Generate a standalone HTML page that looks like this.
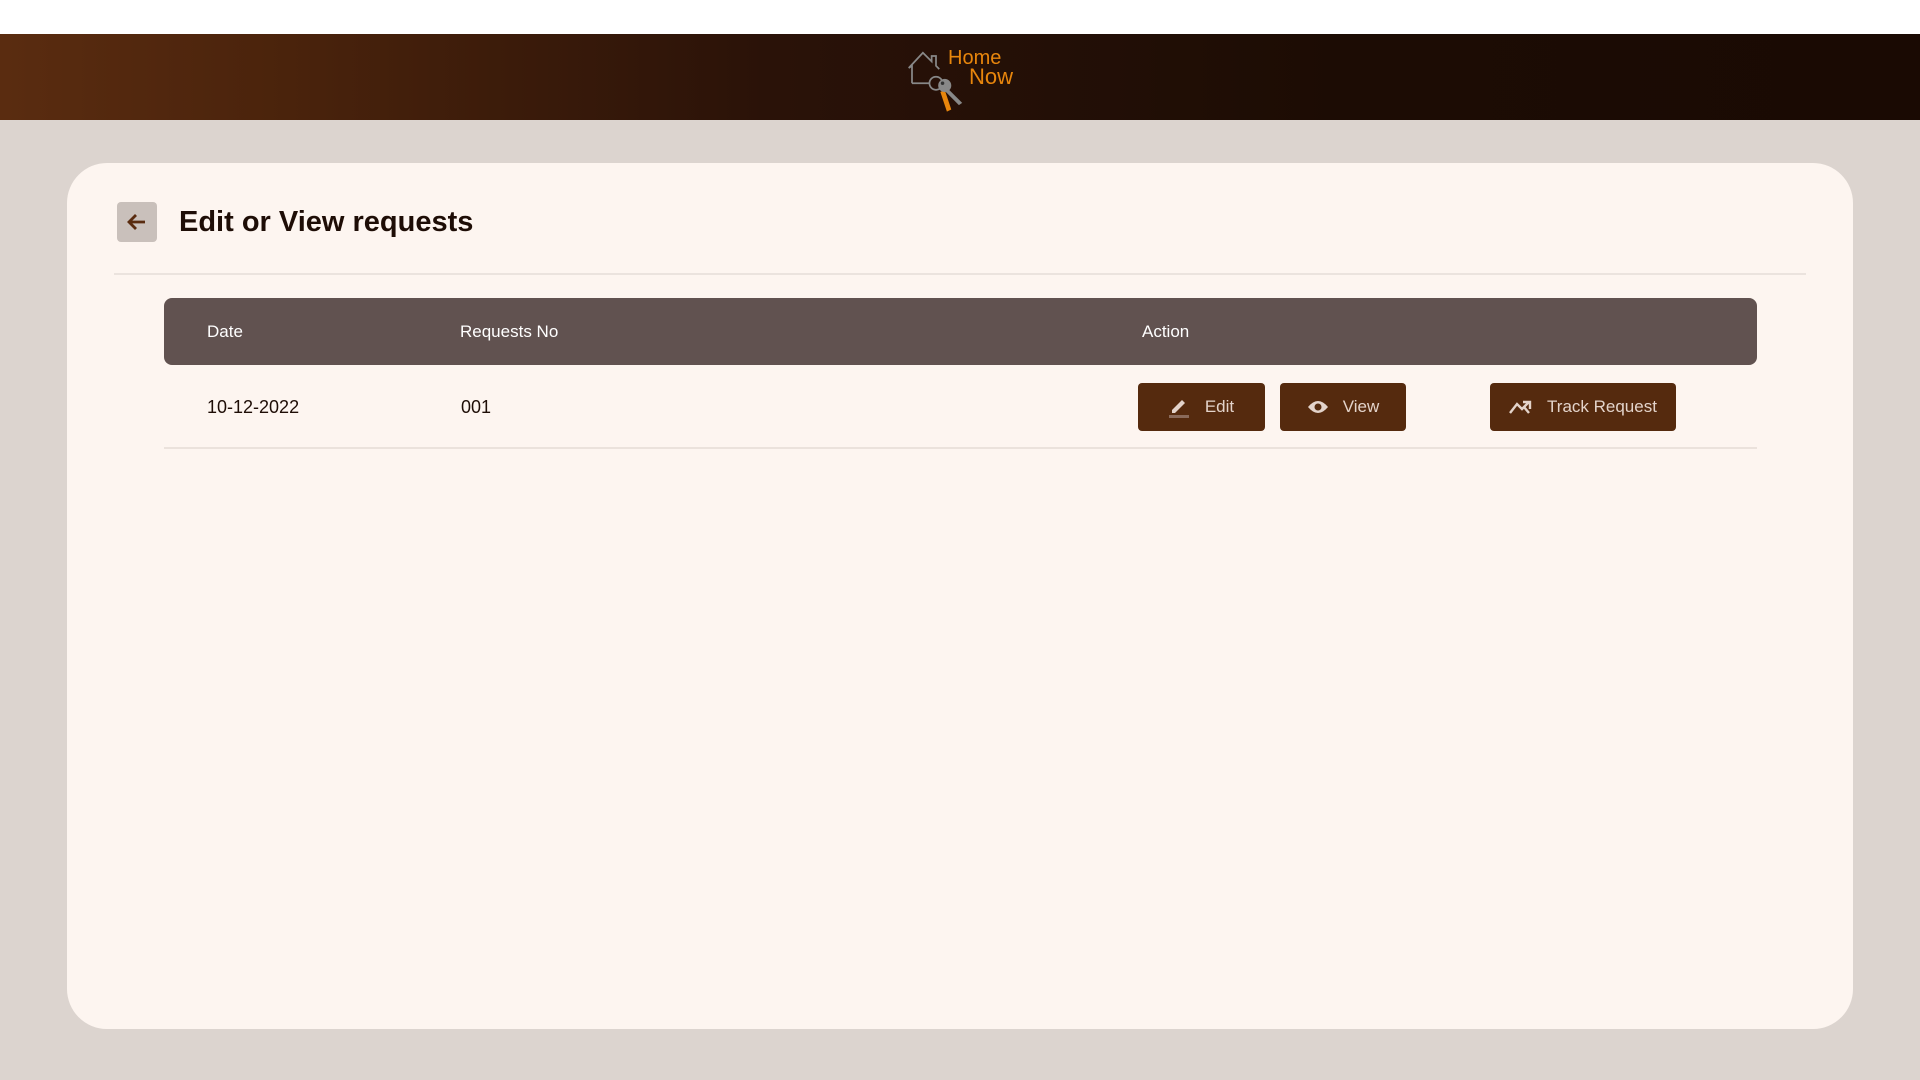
<!DOCTYPE html>
<html><head><meta charset="utf-8"><style>
*{margin:0;padding:0;box-sizing:border-box}
body{width:1920px;height:1080px;background:#dcd4cf;font-family:"Liberation Sans",sans-serif;position:relative;overflow:hidden}
.top{position:absolute;left:0;top:0;width:1920px;height:34px;background:#fff}
.hdr{position:absolute;left:0;top:34px;width:1920px;height:86px;background:linear-gradient(90deg,#5a2c10 0%,#4a230c 15%,#2a1208 40%,#1c0c04 70%,#1a0a03 100%)}
.card{position:absolute;left:67px;top:163px;width:1786px;height:866px;background:#fdf5f0;border-radius:40px}
.back{position:absolute;left:117px;top:202px;width:40px;height:40px;background:#c9c0bb;border-radius:4px}
.title{position:absolute;left:179px;top:203px;font-size:29px;font-weight:bold;color:#1e0d06;line-height:38px}
.div{position:absolute;left:114px;top:273px;width:1692px;height:2px;background:#ebe3de}
.th{position:absolute;left:164px;top:298px;width:1593px;height:67px;background:#615250;border-radius:8px}
.t{position:absolute;font-size:17px;line-height:20px}
.th .t{color:#fff;top:24px}
.row .t{color:#1e0d06;top:397px;font-size:18px}
.line{position:absolute;left:164px;top:447px;width:1593px;height:2px;background:#ebe2dc}
.btn{position:absolute;top:383px;height:48px;background:#552a0e;border-radius:4px;color:#e3d3ca;font-size:17px;display:flex;align-items:center;justify-content:center;gap:14px}
</style></head><body>
<div class="top"></div>
<div class="hdr">
<svg style="position:absolute;left:900px;top:10px" width="72" height="72" viewBox="0 0 60 66">
<path d="M8 36 V20 L5 22 L18 8 L26 16 V11 H30 V20 L33 23 M8 36 H24" fill="none" stroke="#888" stroke-width="1.6"/>
<circle cx="30" cy="36" r="6" fill="none" stroke="#888" stroke-width="1.6"/>
<path d="M34 44 L40 62 L44 60 L38 42Z" fill="#e8860c"/>
<circle cx="38" cy="38" r="6" fill="#888"/>
<path d="M40 40 L54 54 L51 56 L38 43Z" fill="#888"/>
<circle cx="36" cy="36" r="1.6" fill="#333"/>
</svg>
<div style="position:absolute;left:948px;top:14px;color:#e8860c;font-size:20px;line-height:20px">Home</div>
<div style="position:absolute;left:969px;top:32px;color:#e8860c;font-size:22px;line-height:22px">Now</div>
</div>
<div class="card"></div>
<div class="back"><svg width="40" height="40" viewBox="0 0 40 40"><path d="M28 20 H12 M19 13 L12 20 L19 27" fill="none" stroke="#5a2c10" stroke-width="2.8"/></svg></div>
<div class="title">Edit or View requests</div>
<div class="div"></div>
<div class="th">
<div class="t" style="left:43px">Date</div>
<div class="t" style="left:296px">Requests No</div>
<div class="t" style="left:978px">Action</div>
</div>
<div class="row">
<div class="t" style="left:207px">10-12-2022</div>
<div class="t" style="left:461px">001</div>
</div>
<div class="line"></div>
<div class="btn" style="left:1138px;width:127px"><svg width="22" height="22" viewBox="0 0 22 22"><path d="M3 14 L13 4 L16 7 L6 17 H3Z" fill="#e3d3ca"/><rect x="0" y="19" width="20" height="3" fill="#8a6a5a"/></svg>Edit</div>
<div class="btn" style="left:1280px;width:126px"><svg width="22" height="16" viewBox="0 0 22 16"><path d="M1 8 Q11 -4 21 8 Q11 20 1 8Z" fill="#e3d3ca"/><circle cx="11" cy="8" r="3.5" fill="#552a0e"/></svg>View</div>
<div class="btn" style="left:1490px;width:186px"><svg width="24" height="16" viewBox="0 0 24 16"><path d="M1 14 L8 5 L13 10 L20 3 M14 3 H21 V10 M15 8 L20 14" fill="none" stroke="#e3d3ca" stroke-width="2.4"/></svg>Track Request</div>
</body></html>
